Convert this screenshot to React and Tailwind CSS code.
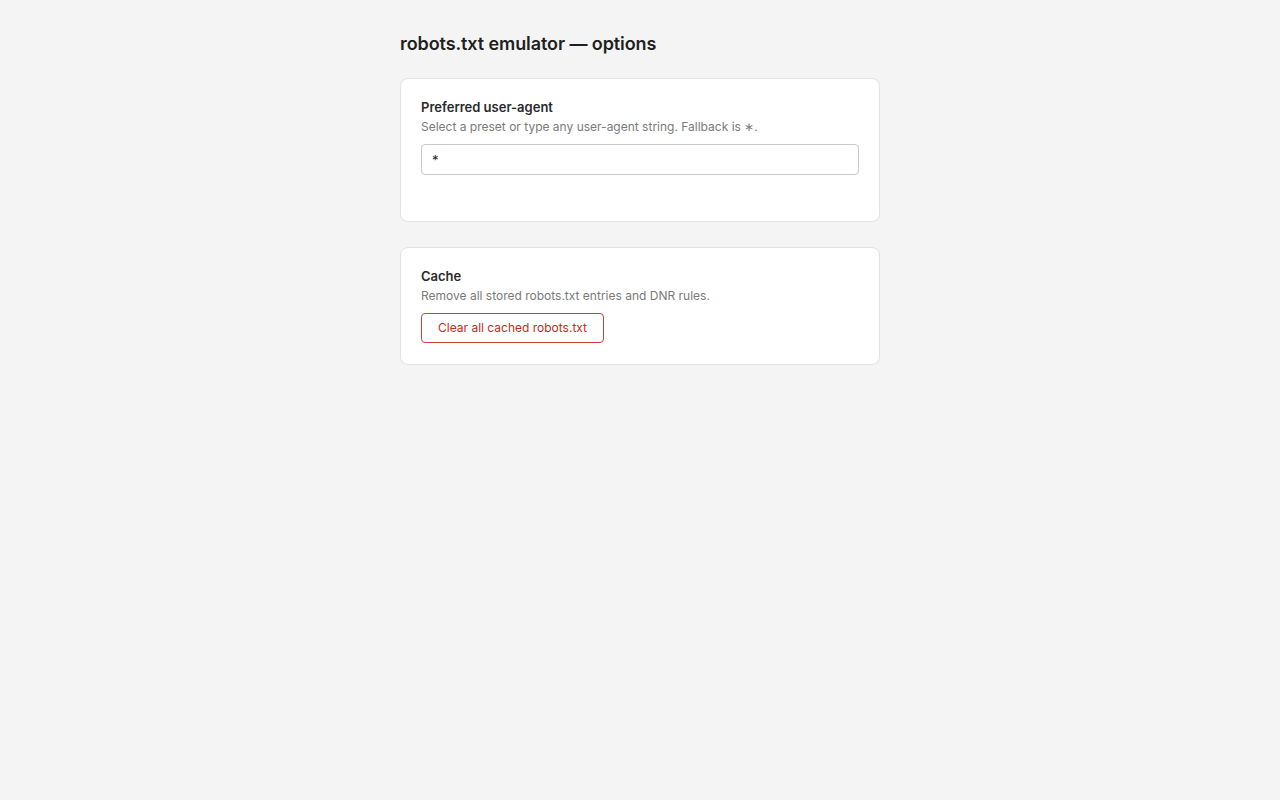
export default function App() {
  return (
    <div className="min-h-screen bg-[#f4f4f4] text-[#1f1f1f]" style={{ fontFamily: 'Inter, "Noto Sans", sans-serif' }}>
      <div className="w-[480px] mx-auto pt-[32px]">
        <h1 className="text-[18px] leading-6 font-semibold tracking-[-0.005em] mb-[22px]">robots.txt emulator — options</h1>

        {/* User agent */}
        <section className="bg-white border border-[#e2e2e2] rounded-lg p-5 mb-[25px]">
          <div className="text-[13px] leading-4 font-semibold text-[#2a2a2a]">Preferred user-agent</div>
          <p className="text-[12px] leading-4 text-[#7a7a7a] mt-1">
            Select a preset or type any user-agent string. Fallback is ∗.
          </p>
          <input
            defaultValue="*"
            className="mt-[9px] w-full h-[31px] px-[10px] text-[13px] border border-[#c9c9c9] rounded-[4px] bg-white outline-none"
          />
          <div className="h-[26px]" />
        </section>

        {/* Cache */}
        <section className="bg-white border border-[#e2e2e2] rounded-lg px-5 pt-5 pb-[21px]">
          <div className="text-[13px] leading-4 font-semibold text-[#2a2a2a]">Cache</div>
          <p className="text-[12px] leading-4 text-[#7a7a7a] mt-1">Remove all stored robots.txt entries and DNR rules.</p>
          <button className="mt-[9px] h-[30px] px-4 text-[12px] text-[#c62a21] border border-[#c9423a] rounded-[4px] bg-white">
            Clear all cached robots.txt
          </button>
        </section>
      </div>
    </div>
  )
}
